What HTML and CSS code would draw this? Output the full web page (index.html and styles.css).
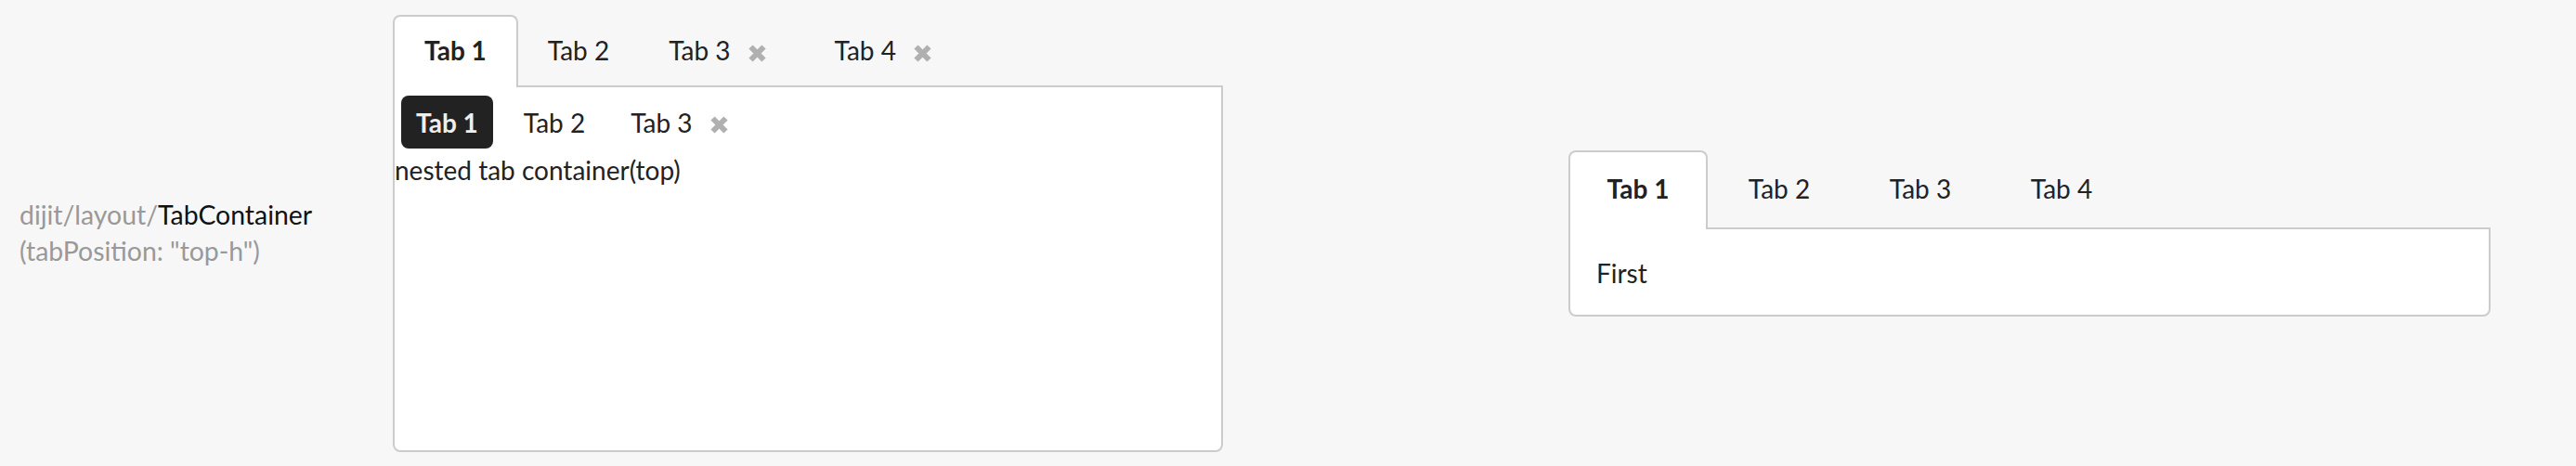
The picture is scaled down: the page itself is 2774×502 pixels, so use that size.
FILE: index.html
```html
<!DOCTYPE html>
<html>
<head>
<meta charset="utf-8">
<link rel="stylesheet" href="styles.css">
</head>
<body>
<div class="row">
  <div class="label">
    <div><span class="muted">dijit/layout/</span><span class="name">TabContainer</span></div>
    <div class="muted">(tabPosition: "top-h")</div>
  </div>

  <div class="tc tc1">
    <div class="strip">
      <div class="tab sel">Tab 1</div>
      <div class="tab">Tab 2</div>
      <div class="tab">Tab 3<span class="close"><svg viewBox="0 0 19 19" width="19" height="19"><path d="M2.5 2.5L16.5 16.5M16.5 2.5L2.5 16.5" stroke="#b0b0b0" stroke-width="6"/></svg></span></div>
      <div class="tab">Tab 4<span class="close"><svg viewBox="0 0 19 19" width="19" height="19"><path d="M2.5 2.5L16.5 16.5M16.5 2.5L2.5 16.5" stroke="#b0b0b0" stroke-width="6"/></svg></span></div>
    </div>
    <div class="pane pane1">
      <div class="pills">
        <div class="pill on">Tab 1</div>
        <div class="pill">Tab 2</div>
        <div class="pill">Tab 3<span class="close"><svg viewBox="0 0 19 19" width="19" height="19"><path d="M2.5 2.5L16.5 16.5M16.5 2.5L2.5 16.5" stroke="#b0b0b0" stroke-width="6"/></svg></span></div>
      </div>
      <div class="nested">nested tab container(top)</div>
    </div>
  </div>

  <div class="tc tc2">
    <div class="strip strip2">
      <div class="tab2 sel">Tab 1</div>
      <div class="tab2">Tab 2</div>
      <div class="tab2">Tab 3</div>
      <div class="tab2">Tab 4</div>
    </div>
    <div class="pane pane2">First</div>
  </div>
</div>
</body>
</html>
```

FILE: styles.css
```css
html, body {
  margin: 0;
  padding: 0;
  background: #f7f7f7;
}
body {
  font-family: Lato, "Open Sans", sans-serif;
  font-size: 28px;
  line-height: 40px;
  color: #222;
}
.row {
  display: flex;
  align-items: center;
  height: 502px;
  padding-left: 21px;
  box-sizing: border-box;
}
.label {
  width: 402px;
  flex: none;
  font-size: 28.4px;
  line-height: 39px;
}
.muted { color: #999; }
.name { color: #111; }

.tc {
  display: flex;
  flex-direction: column;
  flex: none;
}
.tc1 {
  width: 894px;
  height: 471px;
}
.tc2 {
  width: 993px;
  margin-left: 372px;
}
.strip {
  display: flex;
  align-items: flex-end;
  position: relative;
  z-index: 1;
}
.tab {
  padding: 18px 32px 20px;
  margin-bottom: -2px;
  white-space: nowrap;
}
.tab.sel {
  padding: 16px 32px 20px;
  border: 2px solid #ccc;
  border-bottom: none;
  border-radius: 8px 8px 0 0;
  background: #fff;
  font-weight: bold;
}
.close {
  display: inline-block;
  width: 19px;
  height: 19px;
  margin-left: 19px;
  margin-right: 10px;
  vertical-align: -2px;
}
.close svg { display: block; }

.pane {
  background: #fff;
  border: 2px solid #ccc;
  border-radius: 0 0 8px 8px;
}
.pane1 {
  flex: 1;
}
.pills {
  display: flex;
  gap: 17px;
  padding: 9px 0 3px 7px;
}
.pill {
  padding: 9px 16px 8px;
  border-radius: 8px;
  white-space: nowrap;
}
.pill.on {
  background: #222;
  color: #eee;
  font-weight: bold;
}
.pill .close { margin-right: 0; vertical-align: -1px; }

.tab2 {
  width: 150px;
  box-sizing: border-box;
  margin-right: 2px;
  text-align: center;
  padding: 21px 0 24px;
  margin-bottom: -2px;
}
.tab2.sel {
  padding: 19px 0 24px;
  border: 2px solid #ccc;
  border-bottom: none;
  border-radius: 8px 8px 0 0;
  background: #fff;
  font-weight: bold;
}
.pane2 {
  padding: 27px 28px 25px;
}
```
